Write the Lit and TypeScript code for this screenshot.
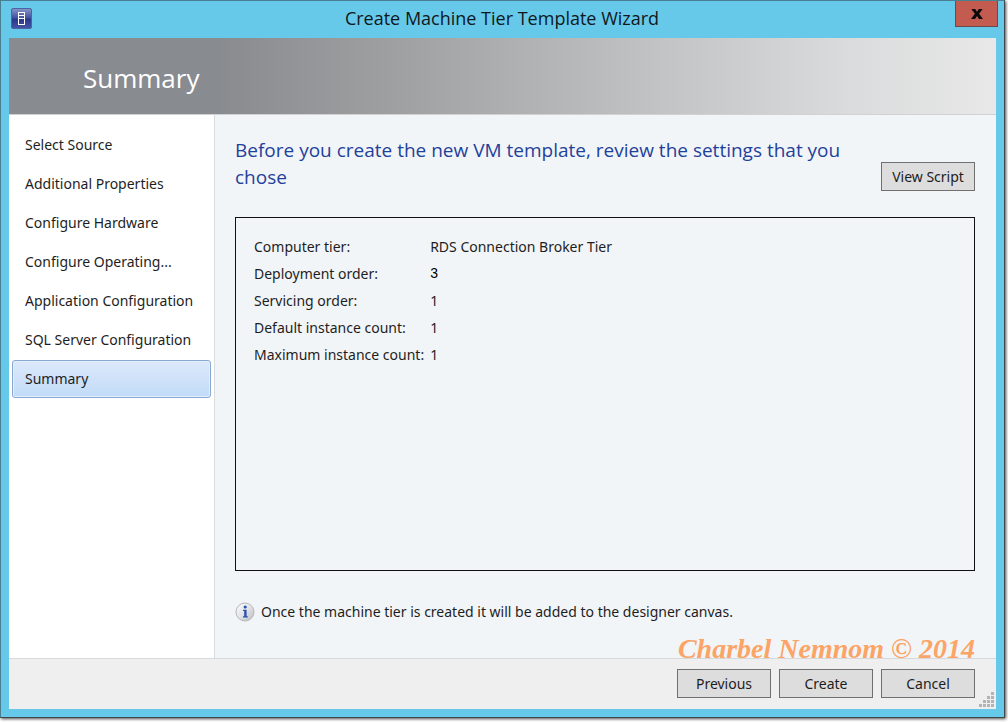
import { LitElement, html, css, svg } from "lit";
import { customElement, state } from "lit/decorators.js";
import { classMap } from "lit/directives/class-map.js";

const STEPS = [
  "Select Source",
  "Additional Properties",
  "Configure Hardware",
  "Configure Operating...",
  "Application Configuration",
  "SQL Server Configuration",
  "Summary",
];

const SETTINGS = [
  { label: "Computer tier:", value: "RDS Connection Broker Tier" },
  { label: "Deployment order:", value: "3", edited: true },
  { label: "Servicing order:", value: "1" },
  { label: "Default instance count:", value: "1" },
  { label: "Maximum instance count:", value: "1" },
];

const GRIP_DOTS = [
  [12, 0],
  [8, 4], [12, 4],
  [4, 8], [8, 8], [12, 8],
  [0, 12], [4, 12], [8, 12], [12, 12],
];

@customElement("wizard-title-bar")
class WizardTitleBar extends LitElement {
  static styles = css`
    :host {
      display: grid;
      grid-template-columns: 40px 1fr 43px;
      height: 37px;
      margin-right: -2px;
      font-family: "Open Sans", "Noto Sans", sans-serif;
    }
    .app-icon {
      margin: 7px 0 0 2px;
      width: 21px;
      height: 21px;
    }
    .title {
      margin: 0;
      font-size: 18px;
      line-height: 34px;
      font-weight: 400;
      text-align: center;
      color: #10181c;
      white-space: nowrap;
    }
    .close {
      display: flex;
      align-items: center;
      justify-content: center;
      width: 43px;
      height: 26px;
      padding: 0;
      border: 1px solid #6b4a4c;
      border-top: 0;
      background: #c35b50;
    }
  `;

  render() {
    return html`
      <svg class="app-icon" viewBox="0 0 21 21" aria-hidden="true">
        <defs>
          <linearGradient id="face" x1="0" y1="0" x2="0" y2="1">
            <stop offset="0" stop-color="#8996c8" />
            <stop offset="0.45" stop-color="#4353a0" />
            <stop offset="0.55" stop-color="#2b378b" />
            <stop offset="1" stop-color="#4556a6" />
          </linearGradient>
        </defs>
        <rect x="0.5" y="0.5" width="20" height="20" rx="1.5" fill="url(#face)" stroke="#4a64a4" />
        <rect x="7.5" y="4.5" width="6" height="12" fill="none" stroke="#fff" />
        <path d="M8 7.5h5M8 10.5h5" stroke="#fff" />
      </svg>
      <h1 class="title">Create Machine Tier Template Wizard</h1>
      <button class="close" aria-label="Close">
        <svg width="12" height="10" viewBox="0 0 12 10">
          <path d="M0.3 0h3.9L6 2.7 7.8 0h3.9L8.1 4.8 12 10H8L6 7.1 4 10H0l3.9-5.2z" fill="#0a0a0a" />
        </svg>
      </button>
    `;
  }
}

@customElement("app-root")
class AppRoot extends LitElement {
  @state() private current = STEPS.length - 1;

  static styles = css`
    :host {
      display: flex;
      box-sizing: border-box;
      min-height: 100vh;
      padding: 0 3px 4px 0;
      background: #fff;
      color: #1e1e1e;
      font-family: "Noto Sans", "Open Sans", sans-serif;
      font-size: 14px;
      line-height: 20px;
    }
    .window {
      flex: 1;
      display: flex;
      flex-direction: column;
      box-sizing: border-box;
      padding: 0 8px;
      border: 1px solid #4a7f91;
      border-right-color: #3f474a;
      border-bottom-color: #3f474a;
      background: #66c9ea;
      box-shadow: 1px 1px 3px #4c4c4c;
    }
    .client {
      flex: 1;
      display: flex;
      flex-direction: column;
      margin-bottom: 8px;
      background: #f2f5f8;
    }
    .banner {
      padding: 22px 74px 18px;
      border-bottom: 1px solid #d0d2d4;
      background: linear-gradient(90deg, #888b8f 0%, #888b8f 21%, #a0a1a2 40%, #c1c2c3 65%, #dadbdc 85%, #e8e8e8 100%);
    }
    .banner-title {
      margin: 0;
      font-family: "Open Sans", "Noto Sans", sans-serif;
      font-size: 26px;
      line-height: 36px;
      font-weight: 400;
      color: #fff;
    }
    .body {
      flex: 1;
      display: grid;
      grid-template-columns: 206px 1fr;
    }
    .steps {
      display: flex;
      flex-direction: column;
      gap: 1px;
      padding: 11px 3px;
      border-right: 1px solid #d9dcdf;
      background: #fff;
    }
    .step {
      box-sizing: border-box;
      padding: 8px 12px;
      border: 1px solid transparent;
      border-radius: 3px;
      color: inherit;
      text-decoration: none;
      white-space: nowrap;
    }
    .step.selected {
      border-color: #88a8d4;
      background: linear-gradient(#dce9fb, #c2dbf8);
      box-shadow: inset 0 0 0 1px #e4effc;
    }
    .content {
      display: flex;
      flex-direction: column;
      padding: 22px 21px 36px 20px;
    }
    .intro {
      display: flex;
      align-items: flex-end;
      justify-content: space-between;
      gap: 24px;
      margin-bottom: 26px;
    }
    .heading {
      margin: 0;
      font-family: "Open Sans", "Noto Sans", sans-serif;
      font-size: 19px;
      line-height: 27px;
      font-weight: 400;
      color: #1f419b;
    }
    .btn {
      box-sizing: border-box;
      flex: none;
      width: 94px;
      height: 29px;
      padding: 0;
      border: 1px solid #707070;
      background: #ddd;
      color: #1e1e1e;
      font: inherit;
    }
    .settings {
      flex: 1;
      display: grid;
      grid-template-columns: max-content 1fr;
      grid-auto-rows: 27px;
      column-gap: 6px;
      margin: 0;
      padding: 15px 18px;
      border: 1px solid #111;
      line-height: 27px;
    }
    .value {
      margin: 0;
    }
    .value.edited {
      font-family: "Liberation Sans", sans-serif;
      color: #000;
    }
    .note {
      display: flex;
      align-items: center;
      gap: 6px;
      margin: 31px 0 0;
    }
    .footer {
      position: relative;
      display: flex;
      justify-content: flex-end;
      gap: 8px;
      padding: 10px 21px 11px;
      border-top: 1px solid #d6dadc;
      background: #efefef;
    }
    .grip {
      position: absolute;
      right: 2px;
      bottom: 2px;
    }
    .credit {
      position: absolute;
      right: 21px;
      bottom: 100%;
      font-family: "Liberation Serif", serif;
      font-size: 28px;
      line-height: 20px;
      font-weight: 700;
      font-style: italic;
      color: #fba465;
      white-space: nowrap;
    }
  `;

  private select(event: Event, index: number) {
    event.preventDefault();
    this.current = index;
  }

  render() {
    return html`
      <div class="window">
        <wizard-title-bar></wizard-title-bar>
        <div class="client">
          <header class="banner"><h2 class="banner-title">${STEPS[this.current]}</h2></header>
          <div class="body">
            <nav class="steps" aria-label="Wizard steps">
              ${STEPS.map(
                (step, i) => html`<a
                  href="#"
                  class=${classMap({ step: true, selected: i === this.current })}
                  @click=${(e: Event) => this.select(e, i)}
                  >${step}</a
                >`
              )}
            </nav>
            <main class="content">
              <div class="intro">
                <h3 class="heading">Before you create the new VM template, review the settings that you chose</h3>
                <button class="btn">View Script</button>
              </div>
              <dl class="settings">
                ${SETTINGS.map(
                  (s) => html`<dt>${s.label}</dt>
                    <dd class=${classMap({ value: true, edited: !!s.edited })}>${s.value}</dd>`
                )}
              </dl>
              <p class="note">
                <svg width="20" height="20" viewBox="0 0 20 20" aria-hidden="true">
                  <defs>
                    <linearGradient id="disc" x1="0" y1="0" x2="1" y2="1">
                      <stop offset="0" stop-color="#fff" />
                      <stop offset="0.5" stop-color="#e2e3e5" />
                      <stop offset="1" stop-color="#b9bbbe" />
                    </linearGradient>
                  </defs>
                  <circle cx="10" cy="10" r="9" fill="url(#disc)" stroke="#b4b7ba" />
                  <circle cx="10.2" cy="5" r="1.6" fill="#2d50b4" />
                  <path d="M8 7.8h3.6v6.4h1.2v1.2H8v-1.2h1.2V9H8z" fill="#2d50b4" />
                </svg>
                <span>Once the machine tier is created it will be added to the designer canvas.</span>
              </p>
            </main>
          </div>
          <footer class="footer">
            <span class="credit">Charbel Nemnom © 2014</span>
            <button class="btn">Previous</button>
            <button class="btn">Create</button>
            <button class="btn">Cancel</button>
            <svg class="grip" width="15" height="15" viewBox="0 0 15 15" aria-hidden="true">
              ${GRIP_DOTS.map(([x, y]) => svg`<rect x=${x} y=${y} width="3" height="3" fill="#b3b3b3" />`)}
            </svg>
          </footer>
        </div>
      </div>
    `;
  }
}
